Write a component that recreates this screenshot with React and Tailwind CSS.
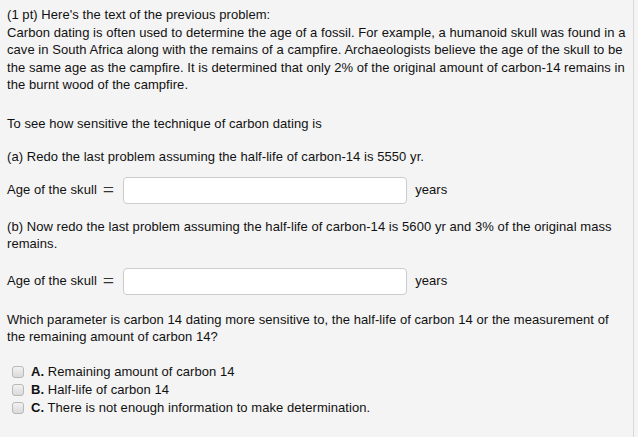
export default function App() {
  const font = { fontFamily: '"Liberation Sans", Arial, sans-serif' };
  const Checkbox = () => (
    <span className="inline-block w-[12px] h-[12px] rounded-[3px] border border-[#b8b8b8] bg-gradient-to-b from-[#f2f2f2] to-[#dadada] shrink-0" />
  );
  const AgeRow = () => (
    <div className="flex items-center">
      <span>Age of the skull</span>
      <span className="ml-[6px] text-[20px] leading-none text-[#333]" style={{ fontFamily: '"Liberation Serif", "Times New Roman", serif' }}>=</span>
      <input type="text" className="ml-[9px] w-[284px] h-[27px] rounded-[4px] border border-[#cccccc] bg-white outline-none" />
      <span className="ml-[8px]">years</span>
    </div>
  );
  return (
    <div className="w-[638px] h-[437px] bg-[#f4f4f4] flex overflow-hidden" style={font}>
      <div className="w-[634px] border-r border-[#d8d8d8] pl-[7px] pr-[6px] pt-[6px] text-[13px] leading-[17.5px] tracking-[0.06px] text-[#111]">
        <p>
          (1 pt) Here's the text of the previous problem:<br />
          Carbon dating is often used to determine the age of a fossil. For example, a humanoid skull was found in a cave in South Africa along with the remains of a campfire. Archaeologists believe the age of the skull to be the same age as the campfire. It is determined that only 2% of the original amount of carbon-14 remains in the burnt wood of the campfire.
        </p>
        <p className="mt-[21px]">To see how sensitive the technique of carbon dating is</p>
        <p className="mt-[16px]">(a) Redo the last problem assuming the half-life of carbon-14 is 5550 yr.</p>
        <div className="mt-[11px]"><AgeRow /></div>
        <p className="mt-[14px]">(b) Now redo the last problem assuming the half-life of carbon-14 is 5600 yr and 3% of the original mass remains.</p>
        <div className="mt-[15px]"><AgeRow /></div>
        <p className="mt-[16px]">Which parameter is carbon 14 dating more sensitive to, the half-life of carbon 14 or the measurement of the remaining amount of carbon 14?</p>
        <div className="mt-[17px] pl-[5px] flex flex-col leading-[18px]">
          <label className="flex items-center gap-[7px]"><Checkbox /><span><b>A.</b> Remaining amount of carbon 14</span></label>
          <label className="flex items-center gap-[7px]"><Checkbox /><span><b>B.</b> Half-life of carbon 14</span></label>
          <label className="flex items-center gap-[7px]"><Checkbox /><span><b>C.</b> There is not enough information to make determination.</span></label>
        </div>
      </div>
      <div className="flex-1 bg-[#f4f4f4]" />
    </div>
  );
}
